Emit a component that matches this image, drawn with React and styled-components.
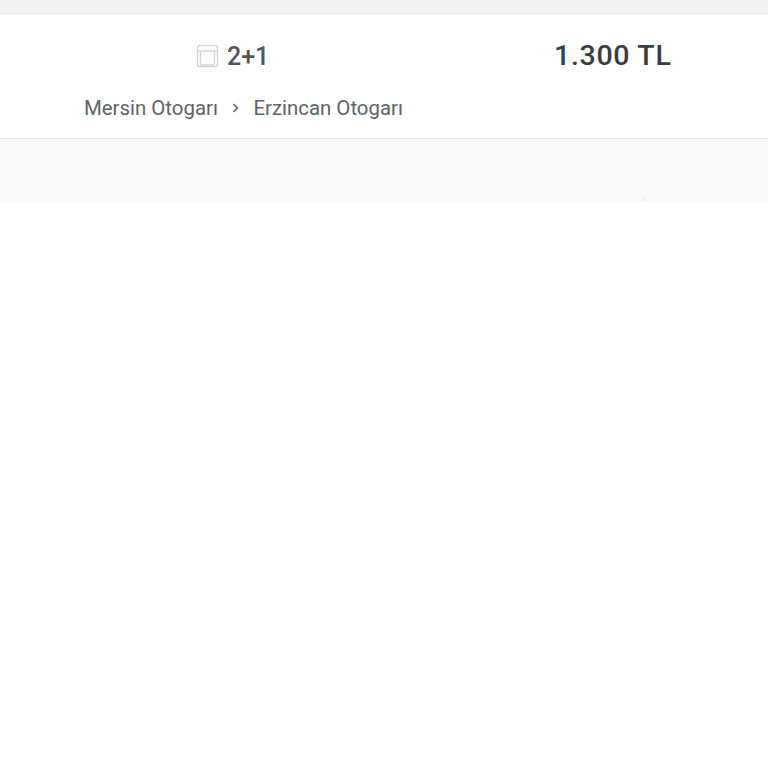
import React from 'react'
import styled, { createGlobalStyle } from 'styled-components'

const GlobalStyle = createGlobalStyle`
    html, body {
        margin: 0;
        padding: 0;
        background: #fff;
        font-family: Roboto, "Liberation Sans", sans-serif;
    }
`

const Page = styled.div`
    width: 768px;
    height: 768px;
    overflow: hidden;
    background: #fff;
    display: flex;
    flex-direction: column;
`

const TopStrip = styled.div`
    height: 13px;
    background: #f1f2f4;
    border-bottom: 1px solid #e6e7e9;
`

const Ticket = styled.div`
    height: 124px;
    display: flex;
    flex-direction: column;
    background: #fff;
    border-bottom: 1px solid #e4e5e7;
`

const MainRow = styled.div`
    display: grid;
    grid-template-columns: 196px 358px auto;
    align-items: center;
    height: 82px;
`

const SeatType = styled.div`
    grid-column: 2;
    display: flex;
    align-items: center;
    gap: 8px;
    padding-top: 2px;
    font-size: 25px;
    font-weight: 500;
    color: #50565e;
`

const Price = styled.div`
    grid-column: 3;
    font-size: 28.5px;
    font-weight: 500;
    letter-spacing: 0.7px;
    color: #363d46;
`

const Route = styled.div`
    display: flex;
    align-items: center;
    padding-left: 84px;
    height: 24px;
    font-size: 20.4px;
    color: #5c636b;
`

const Chevron = styled.svg`
    width: 10px;
    height: 12px;
    margin: 0 12.5px 0 13px;
`

const Footer = styled.div`
    position: relative;
    height: 63px;
    background: #f9f9fa;
`

// faint notch sitting on the bottom edge of the grey band
const FooterMark = styled.span`
    position: absolute;
    left: 643px;
    bottom: 0;
    width: 2px;
    height: 6px;
    background: #f2f2f3;
`

const SeatIcon = () => (
    <svg width="23" height="24" viewBox="0 0 23 24" fill="none" stroke="#d3d5d9" strokeWidth="1.4">
        <rect x="1.500" y="1.500" width="20" height="21" rx="2.500" />
        <path d="M1.500 7h20" />
        <path d="M4.500 7v12.500q0 1.500 1.500 1.500h11q1.500 0 1.500-1.500V7" />
    </svg>
)

function App() {
    return (
        <Page>
            <GlobalStyle />
            <TopStrip />
            <Ticket>
                <MainRow>
                    <SeatType>
                        <SeatIcon />
                        2+1
                    </SeatType>
                    <Price>1.300 TL</Price>
                </MainRow>
                <Route>
                    Mersin Otogarı
                    <Chevron viewBox="0 0 10 12" fill="none" stroke="#5c636b" strokeWidth="1.6">
                        <path d="M2.500 2l4 4-4 4" />
                    </Chevron>
                    Erzincan Otogarı
                </Route>
            </Ticket>
            <Footer>
                <FooterMark />
            </Footer>
        </Page>
    )
}

export default App
